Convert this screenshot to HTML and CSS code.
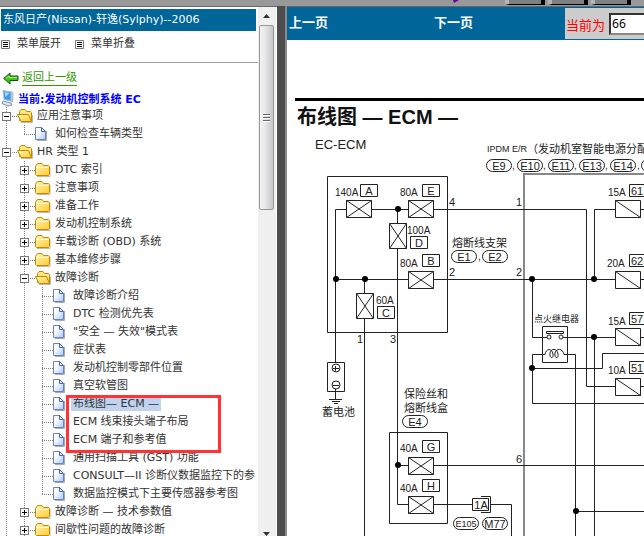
FILE: index.html
```html
<!DOCTYPE html>
<html lang="zh-CN">
<head>
  <meta charset="UTF-8">
  <title>东风日产(Nissan)-轩逸(Sylphy)--2006</title>
  <meta name="viewport" content="width=device-width, initial-scale=1.0">
  <link rel="stylesheet" href="styles.css">
</head>
<body>

  <!-- 图标 -->
  <svg class="defs" width="0" height="0" aria-hidden="true">
    <defs>
      <linearGradient id="gold" x1="0" y1="0" x2="1" y2="1">
        <stop offset="0" stop-color="#fff8b8"/>
        <stop offset="1" stop-color="#ffc830"/>
      </linearGradient>
      <linearGradient id="paper" x1="0" y1="0" x2="1" y2="1">
        <stop offset="0.3" stop-color="#ffffff"/>
        <stop offset="1" stop-color="#a9c8f5"/>
      </linearGradient>
      <symbol id="folder" viewBox="0 0 18 18">
        <path d="M2 15.500h13V6" fill="none" stroke="#bbb"/>
        <path d="M.5 5.500l1-2 1.500-1h4l1.500 2h5l1 1v8l-1 1h-12l-1-1z" fill="url(#gold)" stroke="#c08a00"/>
        <path d="M1.500 6.500h12" stroke="#fffbd8"/>
      </symbol>
      <symbol id="folder-open" viewBox="0 0 18 18">
        <path d="M4 15.500h11.500V8" fill="none" stroke="#bbb"/>
        <path d="M2.500 13.500V4.500l1.500-2h4l1.500 2h4l1 1v9z" fill="#ffe680" stroke="#c08a00"/>
        <path d="M.5 7.500h11l3 7H4z" fill="url(#gold)" stroke="#c08a00"/>
      </symbol>
      <symbol id="page" viewBox="0 0 18 18">
        <path d="M2 15.500h9.500V6" fill="none" stroke="#aaa"/>
        <path d="M.5 2.500h6l4 4v8H.5z" fill="url(#paper)" stroke="#6c83b8"/>
        <path d="M6.500 2.500v4h4z" fill="#dceaff" stroke="#4a68a8"/>
      </symbol>
      <symbol id="list" viewBox="0 0 9 9">
        <path d="M.5.5h8v8h-8z" fill="#fff" stroke="#777"/>
        <path d="M2 2.500h5M2 4.500h5M2 6.500h5" stroke="#000"/>
      </symbol>
      <symbol id="fuse" viewBox="0 0 26 18">
        <path d="M.5.5h25v17H.5zL25.500 17.500M.5 17.500L25.500.5" fill="#fff" stroke="#222"/>
      </symbol>
      <symbol id="fuse-v" viewBox="0 0 18 26">
        <path d="M.5.5h17v25H.5zL17.500 25.500M.5 25.500L17.500.5" fill="#fff" stroke="#222"/>
      </symbol>
      <symbol id="fuse-s" viewBox="0 0 26 18">
        <path d="M.5.5h25v17H.5zL25.500 17.500" fill="#fff" stroke="#222"/>
      </symbol>
    </defs>
  </svg>

  <div class="topbar">
    <svg class="pointer" width="8" height="3" aria-hidden="true"><path d="M1 0h6L2 3z" fill="#6a00a8"/></svg>
    <span class="top-btn"></span>
    <span class="top-btn"></span>
    <span class="top-btn"></span>
  </div>

  <div class="frames">
    <aside class="sidebar">
      <div class="menu">
        <h1 class="car">东风日产(Nissan)-轩逸(Sylphy)--2006</h1>
        <div class="tools">
          <a href="#"><svg width="9" height="9"><use href="#list"/></svg>菜单展开</a>
          <a href="#"><svg width="9" height="9"><use href="#list"/></svg>菜单折叠</a>
        </div>
        <div class="back">
          <svg width="16" height="12" viewBox="0 0 16 12"><path d="M.7 6.500L7 1v3h8v4.500H7V12z" fill="#3fc81c" stroke="#14500a"/><path d="M3 6.500l3-2.500v1.500h8" fill="none" stroke="#a5ef83"/></svg>
          <a href="#">返回上一级</a>
        </div>
        <div class="root">
          <svg width="16" height="18" viewBox="0 0 16 18"><path d="M3 1.500l8 1.500v9L4 10.500z" fill="#3f9bea" stroke="#a9bfd8"/><path d="M4.500 3l5 1-4 4z" fill="#9fd8ff"/><path d="M11 2.500l2 1v9l-2 .5z" fill="#c9d3df" stroke="#8797aa" stroke-width=".5"/><path d="M3 12l8 2 1 2-4 1-6-2.500z" fill="#dfe6ee" stroke="#8291a5"/></svg>
          <a href="#">当前:发动机控制系统 EC</a>
        </div>

        <ul class="tree">
          <li>
            <div class="row"><button class="toggle open" aria-label="折叠"></button><svg class="icon"><use href="#folder-open"/></svg><a href="#">应用注意事项</a></div>
            <ul>
              <li><div class="row"><svg class="icon"><use href="#page"/></svg><a href="#">如何检查车辆类型</a></div></li>
            </ul>
          </li>
          <li class="more">
            <div class="row"><button class="toggle open" aria-label="折叠"></button><svg class="icon"><use href="#folder-open"/></svg><a href="#">HR 类型 1</a></div>
            <ul>
              <li><div class="row"><button class="toggle" aria-label="展开"></button><svg class="icon"><use href="#folder"/></svg><a href="#">DTC 索引</a></div></li>
              <li><div class="row"><button class="toggle" aria-label="展开"></button><svg class="icon"><use href="#folder"/></svg><a href="#">注意事项</a></div></li>
              <li><div class="row"><button class="toggle" aria-label="展开"></button><svg class="icon"><use href="#folder"/></svg><a href="#">准备工作</a></div></li>
              <li><div class="row"><button class="toggle" aria-label="展开"></button><svg class="icon"><use href="#folder"/></svg><a href="#">发动机控制系统</a></div></li>
              <li><div class="row"><button class="toggle" aria-label="展开"></button><svg class="icon"><use href="#folder"/></svg><a href="#">车载诊断 (OBD) 系统</a></div></li>
              <li><div class="row"><button class="toggle" aria-label="展开"></button><svg class="icon"><use href="#folder"/></svg><a href="#">基本维修步骤</a></div></li>
              <li>
                <div class="row"><button class="toggle open" aria-label="折叠"></button><svg class="icon"><use href="#folder-open"/></svg><a href="#">故障诊断</a></div>
                <ul>
                  <li><div class="row"><svg class="icon"><use href="#page"/></svg><a href="#">故障诊断介绍</a></div></li>
                  <li><div class="row"><svg class="icon"><use href="#page"/></svg><a href="#">DTC 检测优先表</a></div></li>
                  <li><div class="row"><svg class="icon"><use href="#page"/></svg><a href="#">"安全 — 失效"模式表</a></div></li>
                  <li><div class="row"><svg class="icon"><use href="#page"/></svg><a href="#">症状表</a></div></li>
                  <li><div class="row"><svg class="icon"><use href="#page"/></svg><a href="#">发动机控制零部件位置</a></div></li>
                  <li><div class="row"><svg class="icon"><use href="#page"/></svg><a href="#">真空软管图</a></div></li>
                  <li class="marked"><div class="row"><svg class="icon"><use href="#page"/></svg><a href="#" class="selected">布线图— ECM —</a></div><span class="mark"></span></li>
                  <li><div class="row"><svg class="icon"><use href="#page"/></svg><a href="#">ECM 线束接头端子布局</a></div></li>
                  <li><div class="row"><svg class="icon"><use href="#page"/></svg><a href="#">ECM 端子和参考值</a></div></li>
                  <li><div class="row"><svg class="icon"><use href="#page"/></svg><a href="#">通用扫描工具 (GST) 功能</a></div></li>
                  <li><div class="row"><svg class="icon"><use href="#page"/></svg><a href="#">CONSULT—II 诊断仪数据监控下的参</a></div></li>
                  <li><div class="row"><svg class="icon"><use href="#page"/></svg><a href="#">数据监控模式下主要传感器参考图</a></div></li>
                </ul>
              </li>
              <li><div class="row"><button class="toggle" aria-label="展开"></button><svg class="icon"><use href="#folder"/></svg><a href="#">故障诊断 — 技术参数值</a></div></li>
              <li class="more"><div class="row"><button class="toggle" aria-label="展开"></button><svg class="icon"><use href="#folder"/></svg><a href="#">间歇性问题的故障诊断</a></div></li>
            </ul>
          </li>
        </ul>
      </div>
      <div class="scrollbar">
        <svg class="arrow" width="7" height="4"><path d="M0 4L3.500 0 7 4z" fill="#333"/></svg>
        <div class="thumb"><span class="grip"></span></div>
        <svg class="arrow down" width="7" height="4"><path d="M0 0h7L3.500 4z" fill="#333"/></svg>
      </div>
    </aside>

    <div class="splitter"></div>

    <main class="content">
      <nav class="pager">
        <a href="#">上一页</a>
        <a href="#">下一页</a>
        <div class="current">
          <label for="pageNo">当前为</label>
          <input type="text" id="pageNo" value="66">
        </div>
      </nav>

      <h2 class="title">布线图 — ECM —</h2>

      <svg class="diagram" width="357" height="404" viewBox="287 132 357 404">
        <!-- 外框 -->
        <g class="wire">
          <path d="M327.500 176.500h120v156h-120zM389.500 432.500h58v91h-58z"/>
          <path class="thick" d="M644 174H524V536"/>
          <!-- 导线 -->
          <path d="M335.500 362V209.500H586.500V386.500H616"/>
          <path d="M397.500 209V504.500H472M364.500 279V536M335.500 279.500H644"/>
          <path d="M594.500 280V209.500H644M397.500 465.500H644"/>
          <path d="M532.500 279V337.500H547M563 337.500H644M594.500 337V536M644 386.500H616"/>
          <path d="M644 353.500H602.500V368.500H532.500M644 403.500H532.500V354.500H545M565 354.500H575.500V536M576 511.500H644"/>
          <path d="M491 504.500H511.500V536"/>
        </g>
        <g class="dot">
          <circle cx="398" cy="209" r="3"/><circle cx="336" cy="279" r="3"/><circle cx="365" cy="279" r="3"/>
          <circle cx="532" cy="279" r="3"/><circle cx="594" cy="279" r="3"/><circle cx="594" cy="337" r="3"/>
          <circle cx="532" cy="368" r="3"/><circle cx="398" cy="465" r="3"/><circle cx="576" cy="511" r="3"/>
        </g>

        <!-- 熔断线 -->
        <use href="#fuse" x="346" y="200" width="26" height="18"/>
        <use href="#fuse" x="408" y="200" width="26" height="18"/>
        <use href="#fuse" x="408" y="271" width="26" height="18"/>
        <use href="#fuse" x="408" y="457" width="26" height="18"/>
        <use href="#fuse" x="408" y="496" width="26" height="18"/>
        <use href="#fuse-v" x="389" y="223" width="18" height="26"/>
        <use href="#fuse-v" x="356" y="293" width="18" height="26"/>
        <use href="#fuse-s" x="615" y="200" width="26" height="18"/>
        <use href="#fuse-s" x="615" y="271" width="26" height="18"/>
        <use href="#fuse-s" x="615" y="328" width="26" height="18"/>
        <use href="#fuse-s" x="615" y="378" width="26" height="18"/>

        <!-- 电池 -->
        <g class="wire">
          <path class="box" d="M327.500 362.500h17v29h-17z"/>
          <circle cx="336" cy="368" r="4"/><circle cx="336" cy="385" r="4"/>
          <path d="M333 368.500h6M335.500 366v5M333 385.500h6M335.500 389v10M329 399.500h13M332 401.500h8M334 403.500h4"/>
        </g>

        <!-- 继电器 -->
        <g class="wire">
          <path d="M542.500 326.500h25v36h-25z"/>
          <path d="M546.500 331.500h17v2h-17z"/>
          <circle class="box" cx="549" cy="337" r="2"/><circle class="box" cx="561" cy="337" r="2"/>
          <path d="M545 354.500C546 348 552 348 553 354C554 359 549 359 550 353C551 348 557 348 558 354C559 359 554 359 555 353C556 348 563 348 564 354.500h2"/>
        </g>

        <g class="wire">
          <path class="box" d="M472.500 498.500h16v12h-16z"/>
          <path d="M481 496.500h9.500v16H481"/>
          <!-- 标号框 -->
          <path d="M360.500 184.500h17v12h-17zM422.500 184.500h17v12h-17zM410.500 236.500h17v12h-17zM422.500 254.500h17v12h-17zM377.500 306.500h17v12h-17zM422.500 440.500h17v12h-17zM422.500 479.500h17v12h-17z"/>
          <path d="M629.500 184.500h20v12h-20zM629.500 254.500h20v12h-20zM629.500 312.500h20v12h-20zM629.500 361.500h20v12h-20z"/>
          <rect x="451.500" y="250.500" width="25" height="12" rx="6"/><rect x="482.500" y="250.500" width="25" height="12" rx="6"/>
          <rect x="486.500" y="159.500" width="25" height="12" rx="6"/><rect x="517.500" y="159.500" width="25" height="12" rx="6"/>
          <rect x="548.500" y="159.500" width="25" height="12" rx="6"/><rect x="579.500" y="159.500" width="25" height="12" rx="6"/>
          <rect x="610.500" y="159.500" width="25" height="12" rx="6"/><rect x="641.500" y="159.500" width="25" height="12" rx="6"/>
          <rect x="402.500" y="415.500" width="25" height="12" rx="6"/>
          <rect x="453.500" y="517.500" width="25" height="12" rx="6"/><rect x="482.500" y="517.500" width="25" height="12" rx="6"/>
        </g>

        <g class="txt">
          <text class="big" x="315" y="149">EC-ECM</text>
          <text class="ipdm" x="487" y="152">IPDM E/R</text>
          <text class="cn" x="527" y="153">（发动机室智能电源分配</text>
          <text class="cn" x="452" y="247">熔断线支架</text>
          <text class="cn" x="322" y="416">蓄电池</text>
          <text class="cn" x="404" y="398">保险丝和</text>
          <text class="cn" x="404" y="412">熔断线盒</text>
          <text class="cn small" x="534" y="322">点火继电器</text>

          <text x="335" y="196">140A</text><text x="400" y="196">80A</text><text x="407" y="234">100A</text>
          <text x="400" y="267">80A</text><text x="376" y="304">60A</text><text x="400" y="452">40A</text><text x="400" y="492">40A</text>
          <text x="608" y="196">15A</text><text x="607" y="267">20A</text><text x="608" y="325">15A</text><text x="608" y="374">10A</text>
          <text x="512" y="169">,</text><text x="543" y="169">,</text><text x="574" y="169">,</text><text x="605" y="169">,</text><text x="637" y="169">,</text><text x="478" y="260">,</text>
        </g>
        <g class="txt pin">
          <text x="449" y="206">4</text><text x="516" y="206">1</text><text x="449" y="276">2</text><text x="516" y="276">2</text>
          <text x="357" y="343">1</text><text x="390" y="343">3</text><text x="516" y="463">6</text>
          <text x="631" y="195">61</text><text x="631" y="265">62</text><text x="631" y="323">57</text><text x="631" y="372">51</text>
        </g>
        <g class="txt pin mid">
          <text x="369" y="195">A</text><text x="431" y="195">E</text><text x="419" y="247">D</text><text x="431" y="265">B</text>
          <text x="386" y="317">C</text><text x="431" y="451">G</text><text x="431" y="490">H</text><text x="481" y="509">1A</text>
          <text x="464" y="261">E1</text><text x="495" y="261">E2</text><text x="499" y="170">E9</text><text x="530" y="170">E10</text>
          <text x="561" y="170">E11</text><text x="592" y="170">E13</text><text x="623" y="170">E14</text><text x="415" y="426">E4</text>
          <text class="small" x="466" y="527">E105</text><text x="495" y="528">M77</text>
        </g>
      </svg>
    </main>
  </div>

</body>
</html>
```
FILE: styles.css
```css
* {
  box-sizing: border-box;
}

body {
  margin: 0;
  height: 100vh;
  display: flex;
  flex-direction: column;
  overflow: hidden;
  background: #fff;
  font-family: "DejaVu Sans", "Noto Sans CJK SC", sans-serif;
  font-size: 11px;
  color: #333;
}

a {
  color: inherit;
  text-decoration: none;
}

.defs {
  position: absolute;
}

/* 顶部工具条 */
.topbar {
  flex: none;
  display: flex;
  gap: 3px;
  height: 6px;
  padding-right: 13px;
  background: #999;
}

.pointer {
  margin-left: auto;
  margin-right: 42px;
}

.top-btn {
  flex: none;
  width: 40px;
  height: 5px;
  background: #808080;
  border-left: 4px solid #b4b4b4;
  border-right: 4px solid #000;
  border-bottom: 1px solid #000;
}

.frames {
  flex: 1;
  display: flex;
  min-height: 0;
}

/* 左侧菜单 */
.sidebar {
  flex: none;
  display: flex;
  width: 277px;
  border-top: 1px solid #696969;
}

.menu {
  flex: 1;
  min-width: 0;
  overflow: hidden;
}

.car {
  height: 22px;
  margin: 2px 2px 0 1px;
  padding-left: 2px;
  background: #069;
  color: #fff;
  font-size: 11px;
  font-weight: normal;
  line-height: 22px;
}

.tools {
  display: flex;
  gap: 14px;
  height: 32px;
  padding-left: 1px;
  border-bottom: 1px solid #a0a0a0;
  line-height: 24px;
}

.tools a {
  display: flex;
  align-items: center;
  gap: 7px;
  height: 26px;
}

.back {
  display: flex;
  align-items: center;
  gap: 3px;
  height: 22px;
  margin-top: 4px;
  padding-left: 3px;
}

.back a {
  color: #390;
  line-height: 14px;
  border-bottom: 1px solid #390;
}

.root {
  display: flex;
  align-items: center;
  gap: 2px;
  height: 18px;
  color: #00f;
  font-weight: bold;
  white-space: nowrap;
}

.tree,
.tree ul {
  margin: 0;
  padding: 0;
  list-style: none;
}

.tree ul {
  margin-left: 18px;
}

/* 竖虚线 */
.tree li {
  background: repeating-linear-gradient(#808080 0 1px, transparent 1px 2px) 6px 0 / 1px 100% no-repeat;
}

.tree li:last-child {
  background-size: 1px 9px;
}

.tree li.more {
  background-size: 1px 100%;
}

.row {
  display: flex;
  align-items: center;
  height: 18px;
  padding-left: 17px;
  line-height: 18px;
  white-space: nowrap;
  background: repeating-linear-gradient(90deg, #808080 0 1px, transparent 1px 2px) 6px 9px / 11px 1px no-repeat;
}

.toggle {
  flex: none;
  width: 9px;
  height: 9px;
  margin-left: -15px;
  margin-right: 6px;
  padding: 0;
  border: 1px solid #777;
  background:
    linear-gradient(#000, #000) center / 5px 1px no-repeat,
    linear-gradient(#000, #000) center / 1px 5px no-repeat,
    #fff;
}

.toggle.open {
  background:
    linear-gradient(#000, #000) center / 5px 1px no-repeat,
    #fff;
}

.icon {
  flex: none;
  width: 18px;
  height: 18px;
}

.row a {
  padding: 0 2px;
  line-height: 14px;
}

.row a.selected {
  background: #c1d2ee;
}

.marked {
  position: relative;
}

/* 红色标记框 */
.mark {
  position: absolute;
  left: 30px;
  top: 0;
  width: 155px;
  height: 58px;
  border: 3px solid #f33;
}

.scrollbar {
  flex: none;
  display: flex;
  flex-direction: column;
  align-items: center;
  width: 19px;
  padding: 7px 2px 0 1px;
  background: #f0f0f0;
  border-right: 1px solid #fff;
}

.arrow {
  flex: none;
}

.arrow.down {
  margin-top: auto;
}

.thumb {
  display: flex;
  align-items: center;
  justify-content: center;
  width: 15px;
  height: 185px;
  margin-top: 7px;
  border: 1px solid #979797;
  border-radius: 2px;
  background: linear-gradient(90deg, #f5f5f5, #e4e4e6 45%, #c4c5c9);
}

.grip {
  width: 7px;
  height: 8px;
  background: repeating-linear-gradient(#666 0 1px, #fff 1px 2px, transparent 2px 3px);
}

.splitter {
  flex: none;
  width: 8px;
  background: #4d4d4d;
}

/* 右侧内容 */
.content {
  flex: 1;
  min-width: 0;
  overflow: hidden;
  border-top: 1px solid #696969;
  border-left: 2px solid #8a8a8a;
}

.pager {
  display: flex;
  height: 33px;
  background: #069;
  color: #fff;
  font-size: 13px;
  font-weight: bold;
  line-height: 32px;
}

.pager a {
  flex: none;
  padding-left: 2px;
  margin-right: 104px;
}

.current {
  flex: 1 0 76px;
  display: flex;
  align-items: center;
  gap: 4px;
  margin: 1px 0 1px -12px;
  padding-left: 1px;
  overflow: hidden;
  background: #ccc;
}

.current label {
  flex: none;
  padding-top: 4px;
  color: #f00;
  font-weight: normal;
}

.current input {
  flex: none;
  width: 90px;
  height: 22px;
  padding: 0 1px;
  border: 2px inset #888;
  border-radius: 0;
  font-family: "Noto Sans", sans-serif;
  font-size: 12px;
}

.title {
  height: 34px;
  margin: 58px 0 0 8px;
  padding-left: 2px;
  border-top: 3px solid #000;
  color: #111;
  font-family: "Liberation Sans", "Noto Sans CJK SC", sans-serif;
  font-size: 20px;
  line-height: 32px;
  white-space: nowrap;
}

.diagram {
  display: block;
}

.wire {
  fill: none;
  stroke: #222;
}

.wire .box {
  fill: #fff;
}

.wire .thick {
  stroke: #888;
  stroke-width: 2px;
}

.dot {
  fill: #000;
}

.txt {
  fill: #222;
  font-family: "Liberation Sans", "Noto Sans CJK SC", sans-serif;
  font-size: 10px;
}

.txt .big {
  font-size: 13px;
}

.txt .cn,
.pin {
  font-size: 11px;
}

.txt .ipdm,
.txt .small {
  font-size: 9px;
}

.mid {
  text-anchor: middle;
}
```
